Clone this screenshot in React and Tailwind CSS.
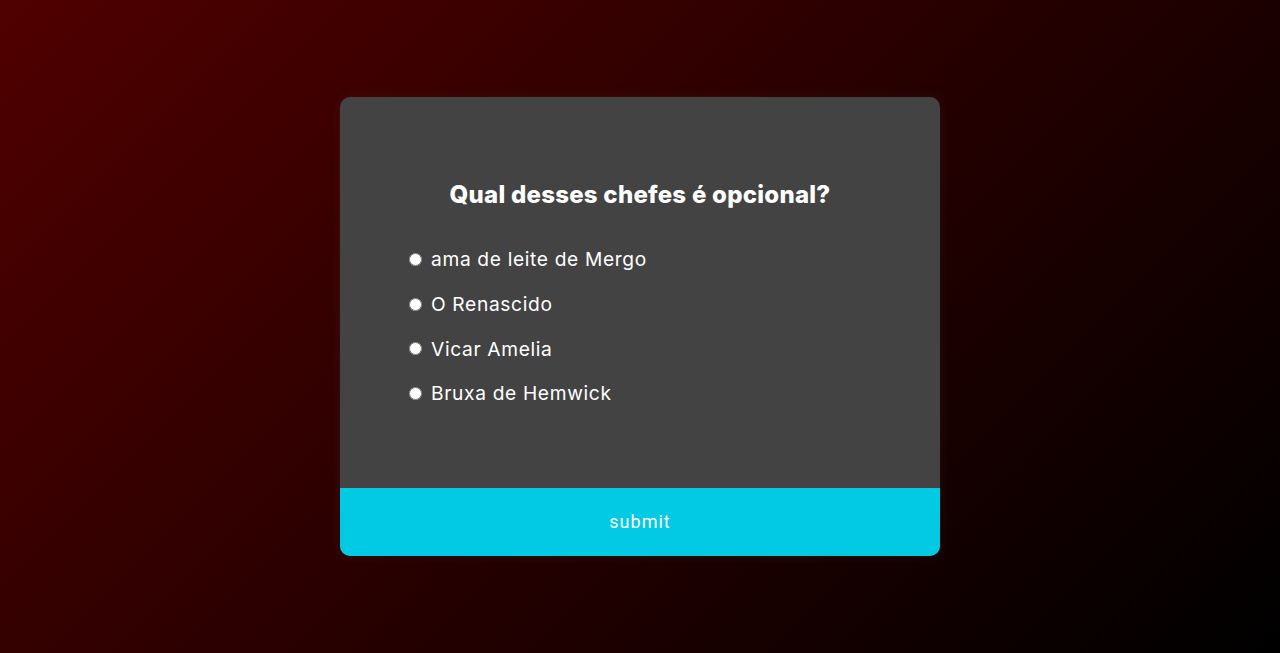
import { useState } from 'react'

const answers = ['ama de leite de Mergo', 'O Renascido', 'Vicar Amelia', 'Bruxa de Hemwick']

export default function App() {
  const [picked, setPicked] = useState(null)

  return (
    <div className="h-screen w-full flex items-center justify-center bg-[linear-gradient(135deg,#500000,#000000)] font-['Inter',sans-serif]">
      <div className="w-[600px] rounded-[10px] overflow-hidden bg-[#434343] shadow-[0_0_10px_2px_rgba(100,100,100,0.1)]">
        {/* Question */}
        <div className="p-16">
          <h2 className="py-4 text-center text-[24px] leading-[36px] font-extrabold text-white tracking-[0.25px]">
            Qual desses chefes é opcional?
          </h2>
          <ul className="list-none p-0">
            {answers.map((a, i) => (
              <li key={a} className="my-4 flex items-center text-[19.2px] leading-[28.8px] text-white tracking-[0.65px]">
                <input
                  type="radio"
                  name="answer"
                  id={`a${i}`}
                  checked={picked === i}
                  onChange={() => setPicked(i)}
                  className="ml-[5px] mr-[9px] w-[13px] h-[13px] accent-white"
                />
                <label htmlFor={`a${i}`} className="cursor-pointer">{a}</label>
              </li>
            ))}
          </ul>
        </div>

        {/* Submit */}
        <button className="w-full h-[68px] pb-[2px] bg-[#03cae4] text-white text-[18px] tracking-[1px] font-['Roboto',sans-serif] cursor-pointer">
          submit
        </button>
      </div>
    </div>
  )
}
